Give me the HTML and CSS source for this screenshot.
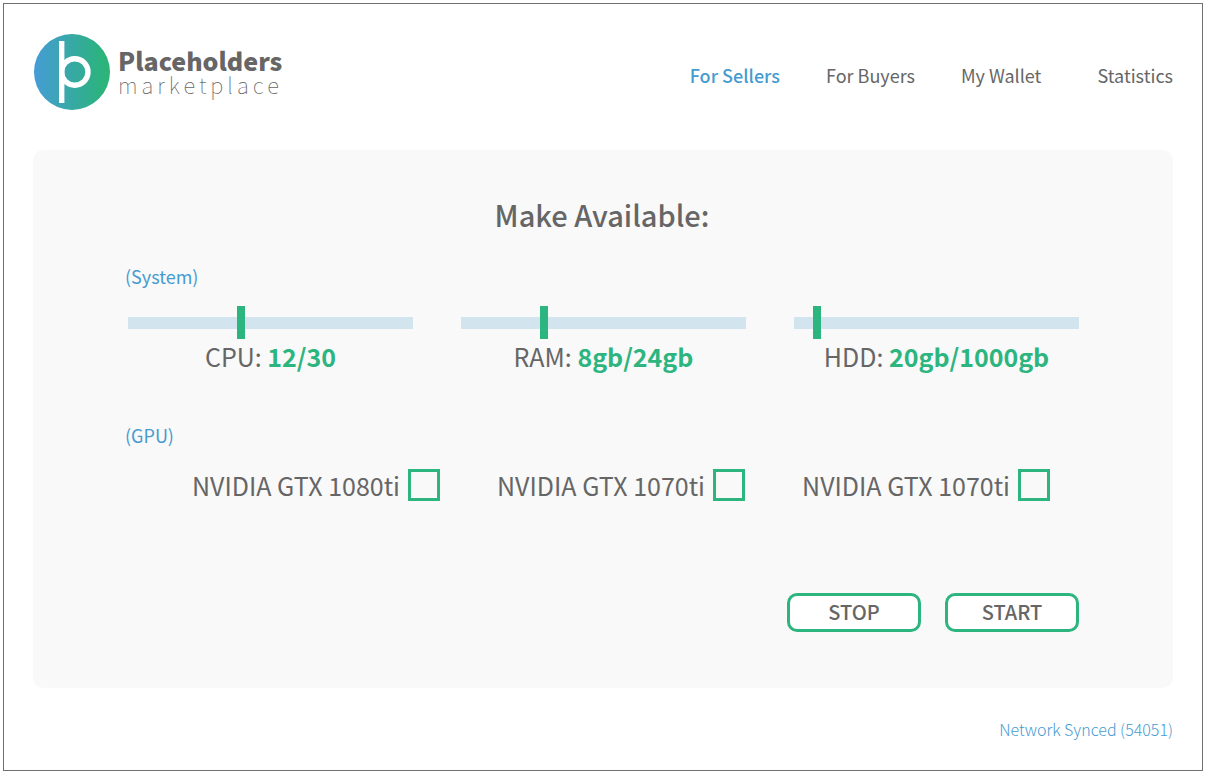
FILE: index.html
```html
<!DOCTYPE html>
<html lang="en">
<head>
<meta charset="utf-8">
<title>Placeholders marketplace</title>
<link rel="stylesheet" href="styles.css">
</head>
<body>
<div class="frame">
  <header class="header">
    <a class="brand" href="#">
      <svg class="brand-logo" viewBox="0 0 76 76" aria-hidden="true">
        <defs>
          <linearGradient id="logo-fill" x1="0" x2="1" y1="0" y2="0">
            <stop offset="0" stop-color="#469cd6"/>
            <stop offset="0.85" stop-color="#2cb281"/>
            <stop offset="1" stop-color="#2db574"/>
          </linearGradient>
        </defs>
        <circle cx="38" cy="38" r="38" fill="url(#logo-fill)"/>
        <path d="M27.7 7V69" fill="none" stroke="#fff" stroke-width="5.4"/>
        <circle cx="40.8" cy="38" r="13.2" fill="none" stroke="#fff" stroke-width="5.4"/>
      </svg>
      <span class="brand-text">
        <span class="brand-name">Placeholders</span>
        <span class="brand-sub">marketplace</span>
      </span>
    </a>
    <nav class="nav">
      <a class="nav-link nav-link-active" href="#">For Sellers</a>
      <a class="nav-link" href="#">For Buyers</a>
      <a class="nav-link" href="#">My Wallet</a>
      <a class="nav-link nav-link-last" href="#">Statistics</a>
    </nav>
  </header>

  <main class="panel">
    <h1 class="title">Make Available:</h1>

    <section class="section">
      <h2 class="section-title">(System)</h2>
      <div class="sliders">
        <div class="slider">
          <input class="range" id="cpu" type="range" min="0" max="100" step="0.1" value="39.4">
          <label class="slider-label" for="cpu">CPU: <strong class="amount">12/30</strong></label>
        </div>
        <div class="slider">
          <input class="range" id="ram" type="range" min="0" max="100" step="0.1" value="28.5">
          <label class="slider-label" for="ram">RAM: <strong class="amount">8gb/24gb</strong></label>
        </div>
        <div class="slider">
          <input class="range" id="hdd" type="range" min="0" max="100" step="0.1" value="6.9">
          <label class="slider-label" for="hdd">HDD: <strong class="amount">20gb/1000gb</strong></label>
        </div>
      </div>
    </section>

    <section class="section">
      <h2 class="section-title">(GPU)</h2>
      <div class="gpus">
        <label class="gpu">NVIDIA GTX 1080ti <input class="check" type="checkbox"></label>
        <label class="gpu">NVIDIA GTX 1070ti <input class="check" type="checkbox"></label>
        <label class="gpu">NVIDIA GTX 1070ti <input class="check" type="checkbox"></label>
      </div>
    </section>

    <div class="actions">
      <button class="button" type="button">STOP</button>
      <button class="button" type="button">START</button>
    </div>
  </main>

  <footer class="footer">Network Synced (54051)</footer>
</div>
</body>
</html>
```

FILE: styles.css
```css
* {
  box-sizing: border-box;
}

body {
  margin: 0;
  padding: 3px 4px 4px 3px;
  background: #fff;
  color: #666;
  font-family: "Noto Sans CJK SC", "Noto Sans", sans-serif;
  font-size: 18px;
  line-height: 24px;
}

.frame {
  min-height: calc(100vh - 7px);
  padding: 30px 29px 28px;
  border: 1px solid #707070;
}

.header {
  display: flex;
  justify-content: space-between;
  align-items: center;
  padding-left: 1px;
  margin-bottom: 40px;
}

.brand {
  display: flex;
  align-items: center;
  gap: 8px;
  color: inherit;
  text-decoration: none;
}

.brand-logo {
  width: 76px;
  height: 76px;
}

.brand-text {
  display: flex;
  flex-direction: column;
}

.brand-name {
  font-size: 25px;
  font-weight: 900;
  line-height: 24px;
}

.brand-sub {
  font-size: 22px;
  font-weight: 100;
  line-height: 24px;
  letter-spacing: 4px;
}

.nav {
  display: flex;
  gap: 46px;
  padding-top: 6px;
}

.nav-link {
  color: inherit;
  text-decoration: none;
}

.nav-link-active {
  color: #469bd0;
  font-weight: 500;
}

.nav-link-last {
  margin-left: 10px;
}

.panel {
  padding: 46px 94px 56px 92px;
  border-radius: 10px;
  background: #f9f9f9;
}

.title {
  margin: 0 0 32px;
  font-size: 29px;
  font-weight: 500;
  line-height: 36px;
  text-align: center;
}

.section {
  margin-bottom: 50px;
}

.section-title {
  margin: 0 0 18px;
  color: #469bd0;
  font-size: 18px;
  font-weight: 400;
  line-height: 24px;
}

.sliders {
  display: grid;
  grid-template-columns: repeat(3, 1fr);
  gap: 48px;
  padding-left: 3px;
}

.slider {
  display: flex;
  flex-direction: column;
  font-size: 25px;
  line-height: 34px;
  text-align: center;
}

.range {
  appearance: none;
  width: 100%;
  height: 33px;
  margin: 0;
  background: transparent;
}

.range::-webkit-slider-runnable-track {
  height: 12px;
  background: #d2e4ed;
}

.range::-webkit-slider-thumb {
  appearance: none;
  width: 8px;
  height: 33px;
  margin-top: -11px;
  border: 0;
  border-radius: 0;
  background: #2cb57e;
}

.amount {
  color: #2cb57e;
  font-weight: 700;
}

.gpus {
  display: flex;
  justify-content: space-between;
  padding: 4px 29px 0 67px;
}

.gpu {
  display: flex;
  align-items: center;
  gap: 8px;
  font-size: 25px;
  line-height: 32px;
}

.check {
  appearance: none;
  width: 32px;
  height: 32px;
  margin: 0;
  border: 3px solid #2cb57e;
}

.check:checked {
  background: #2cb57e;
}

.actions {
  display: flex;
  justify-content: flex-end;
  gap: 24px;
  padding-top: 42px;
}

.button {
  width: 134px;
  height: 39px;
  padding: 0 0 2px;
  border: 3px solid #2cb57e;
  border-radius: 10px;
  background: #fff;
  color: #666;
  font: 500 20px/30px "Noto Sans CJK SC", "Noto Sans", sans-serif;
}

.footer {
  margin-top: 29px;
  color: #469bd0;
  font-size: 16px;
  font-weight: 300;
  text-align: right;
}
```
